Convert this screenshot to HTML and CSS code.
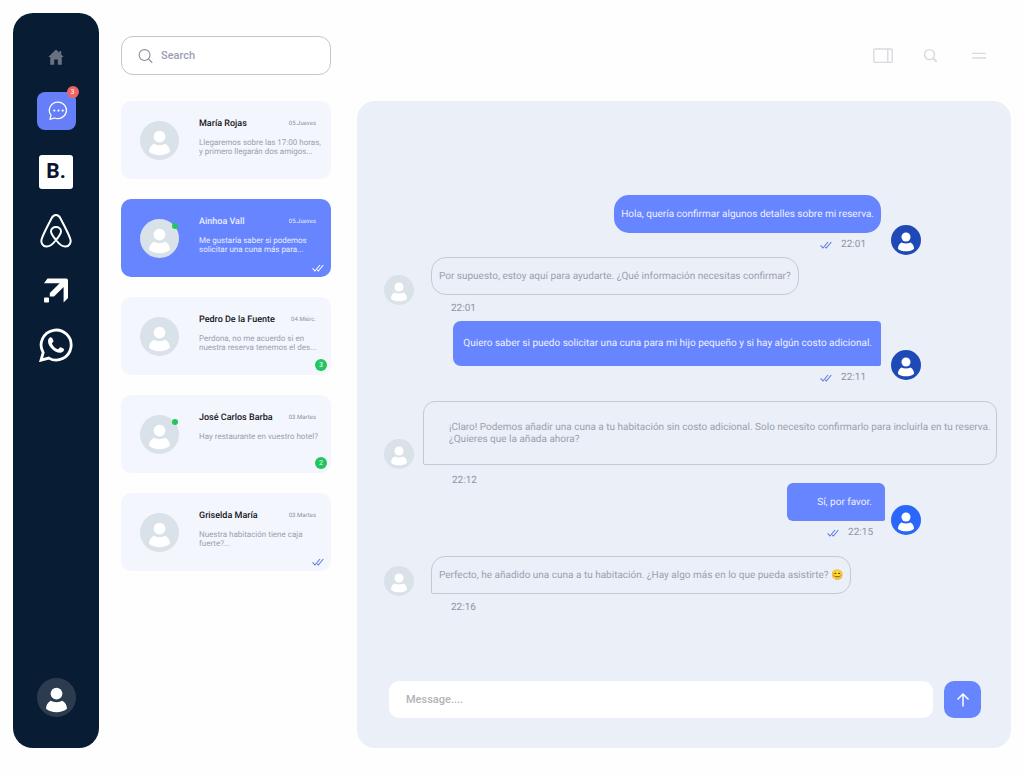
FILE: index.html
```html
<!DOCTYPE html>
<html lang="es">
<head>
    <meta charset="UTF-8">
    <meta name="viewport" content="width=device-width, initial-scale=1.0">
    <title>Mensajes</title>
    <link rel="stylesheet" href="styles.css">
</head>
<body>
    <!-- Iconos compartidos -->
    <svg class="sprite" aria-hidden="true">
        <symbol id="person" viewBox="0 0 39 39">
            <circle cx="19.5" cy="15.6" r="5.9"/>
            <path d="M13.6 22.7C17.2 24.6 21.8 24.6 25.4 22.7C28.2 24.2 29.9 27.2 30 30.8C25 35.3 14 35.3 9 30.8C9.1 27.2 10.8 24.2 13.6 22.7Z"/>
        </symbol>
        <symbol id="ticks" viewBox="0 0 12 8">
            <path d="M0.6 4.4L3 7L8 1M5.3 6L6.3 7L11.3 1"/>
        </symbol>
        <symbol id="lupa" viewBox="0 0 16 16">
            <circle cx="7" cy="7" r="5.8"/>
            <path d="M11.2 11.2L15.2 15.2"/>
        </symbol>
    </svg>

    <div class="app">
        <!-- Barra lateral -->
        <nav class="sidebar">
            <a href="#" class="nav-link" aria-label="Inicio">
                <svg class="icon-home" viewBox="0 0 16 20"><path d="M8 2.5L0.3 9.9H2.2V17.8H6.2V12.4H9.8V17.8H13.8V9.9H15.7L13.2 7.5V4H11.4V5.8Z"/></svg>
            </a>
            <a href="#" class="nav-link nav-chat" aria-label="Mensajes">
                <svg class="icon-chat" viewBox="0 0 20 20"><path d="M10.3 1.2A8.6 8.2 0 1 1 6.6 17L2 18.4L3 14.2A8.6 8.2 0 0 1 10.3 1.2Z"/><circle cx="6.3" cy="9.6" r="1.1"/><circle cx="10.5" cy="9.6" r="1.1"/><circle cx="14.7" cy="9.6" r="1.1"/></svg>
                <span class="nav-badge">3</span>
            </a>
            <a href="#" class="nav-link nav-booking">B.</a>
            <a href="#" class="nav-link" aria-label="Airbnb">
                <svg class="icon-airbnb" viewBox="0 0 32 34"><path d="M16 26C12.8 22.2 11 19.6 11 17.5C11 14.8 13.2 13 16 13C18.8 13 21 14.8 21 17.5C21 19.6 19.2 22.2 16 26ZM16 26C12.8 30.2 9.6 32.8 6.4 32.6C2.6 32.3 0.4 28.4 1.8 24.6C2.4 22.8 9.6 8 11.6 4.2C12.8 1.8 14 1 16 1C18 1 19.2 1.8 20.4 4.2C22.4 8 29.6 22.8 30.2 24.6C31.6 28.4 29.4 32.3 25.6 32.6C22.4 32.8 19.2 30.2 16 26Z"/></svg>
            </a>
            <a href="#" class="nav-link" aria-label="Expedia">
                <svg class="icon-arrow" viewBox="0 0 24 30"><path d="M3.5 5.5H22.2Q24 5.5 24 7.3V25L19.6 29.5V14L10 23.4H5.8V20L15.7 10.2H0Z"/><rect x="0" y="24.5" width="5" height="5" rx="0.8"/></svg>
            </a>
            <a href="#" class="nav-link" aria-label="WhatsApp">
                <svg class="icon-whatsapp" viewBox="0 0 34 34"><path class="ring" d="M2 32.2L4.2 24.6A15 15 0 1 1 9.8 30.1Z"/><path class="phone" d="M11.8 9.2C10.3 9.3 8.9 11 9 13.4C9.2 18.6 15.6 24.6 20.8 24.8C23.2 24.9 25 23.2 25.1 21.4C25.1 20.7 21.9 19.2 21.2 19.3C20.4 19.5 19.6 21.5 18.8 21.3C16.6 20.6 13.8 18 13 15.7C12.7 14.9 14.6 13.9 14.5 13C14.4 12.2 13.1 9.1 11.8 9.2Z"/></svg>
            </a>
            <a href="#" class="nav-link nav-profile" aria-label="Perfil">
                <svg class="avatar"><use href="#person"/></svg>
            </a>
        </nav>

        <!-- Lista de conversaciones -->
        <aside class="inbox">
            <label class="search">
                <svg class="icon-search"><use href="#lupa"/></svg>
                <input type="search" placeholder="Search" aria-label="Search">
            </label>

            <div class="cards">
                <a href="#" class="card">
                    <span class="card-avatar"><svg class="avatar"><use href="#person"/></svg></span>
                    <div class="card-body">
                        <div class="card-head"><h2>María Rojas</h2><time>05.Jueves</time></div>
                        <p>Llegaremos sobre las 17:00 horas,<br>y primero llegarán dos amigos...</p>
                    </div>
                </a>
                <a href="#" class="card active">
                    <span class="card-avatar online"><svg class="avatar"><use href="#person"/></svg></span>
                    <div class="card-body">
                        <div class="card-head"><h2>Ainhoa Vall</h2><time>05.Jueves</time></div>
                        <p>Me gustaría saber si podemos<br>solicitar una cuna más para...</p>
                    </div>
                    <svg class="ticks"><use href="#ticks"/></svg>
                </a>
                <a href="#" class="card">
                    <span class="card-avatar"><svg class="avatar"><use href="#person"/></svg></span>
                    <div class="card-body">
                        <div class="card-head"><h2>Pedro De la Fuente</h2><time>04.Miérc.</time></div>
                        <p>Perdona, no me acuerdo si en<br>nuestra reserva tenemos el des...</p>
                    </div>
                    <span class="count">3</span>
                </a>
                <a href="#" class="card">
                    <span class="card-avatar online"><svg class="avatar"><use href="#person"/></svg></span>
                    <div class="card-body">
                        <div class="card-head"><h2>José Carlos Barba</h2><time>03.Martes</time></div>
                        <p>Hay restaurante en vuestro hotel?</p>
                    </div>
                    <span class="count">2</span>
                </a>
                <a href="#" class="card">
                    <span class="card-avatar"><svg class="avatar"><use href="#person"/></svg></span>
                    <div class="card-body">
                        <div class="card-head"><h2>Griselda María</h2><time>03.Martes</time></div>
                        <p>Nuestra habitación tiene caja<br>fuerte?...</p>
                    </div>
                    <svg class="ticks"><use href="#ticks"/></svg>
                </a>
            </div>
        </aside>

        <!-- Conversación -->
        <main class="main">
            <header class="toolbar">
                <button type="button" aria-label="Panel"><svg class="icon-tool" viewBox="0 0 24 24"><rect x="2.8" y="5" width="18.4" height="13.4" rx="1.5"/><path d="M16.8 5V18.4"/></svg></button>
                <button type="button" aria-label="Buscar"><svg class="icon-tool" viewBox="0 0 24 24"><circle cx="10.5" cy="10.6" r="5"/><path class="thick" d="M14.3 14.4L17.8 17.9"/></svg></button>
                <button type="button" aria-label="Menú"><svg class="icon-tool" viewBox="0 0 24 24"><path d="M5 9.4H19M5 14H19"/></svg></button>
            </header>

            <section class="chat">
                <div class="messages">
                    <div class="message out low">
                        <div class="message-body">
                            <p class="bubble">Hola, quería confirmar algunos detalles sobre mi reserva.</p>
                            <div class="meta"><svg class="ticks"><use href="#ticks"/></svg><time>22:01</time></div>
                        </div>
                        <svg class="avatar"><use href="#person"/></svg>
                    </div>
                    <div class="message in low near">
                        <svg class="avatar"><use href="#person"/></svg>
                        <div class="message-body">
                            <p class="bubble">Por supuesto, estoy aquí para ayudarte. ¿Qué información necesitas confirmar?</p>
                            <div class="meta"><time>22:01</time></div>
                        </div>
                    </div>
                    <div class="message out near">
                        <div class="message-body">
                            <p class="bubble bubble-wide">Quiero saber si puedo solicitar una cuna para mi hijo pequeño y si hay algún costo adicional.</p>
                            <div class="meta"><svg class="ticks"><use href="#ticks"/></svg><time>22:11</time></div>
                        </div>
                        <svg class="avatar"><use href="#person"/></svg>
                    </div>
                    <div class="message in far long">
                        <svg class="avatar"><use href="#person"/></svg>
                        <div class="message-body">
                            <p class="bubble">¡Claro! Podemos añadir una cuna a tu habitación sin costo adicional. Solo necesito confirmarlo para incluirla en tu reserva.<br>¿Quieres que la añada ahora?</p>
                            <div class="meta"><time>22:12</time></div>
                        </div>
                    </div>
                    <div class="message out latest">
                        <div class="message-body">
                            <p class="bubble bubble-short">Sí, por favor.</p>
                            <div class="meta"><svg class="ticks"><use href="#ticks"/></svg><time>22:15</time></div>
                        </div>
                        <svg class="avatar"><use href="#person"/></svg>
                    </div>
                    <div class="message in far">
                        <svg class="avatar"><use href="#person"/></svg>
                        <div class="message-body">
                            <p class="bubble bubble-reply">Perfecto, he añadido una cuna a tu habitación. ¿Hay algo más en lo que pueda asistirte? 😊</p>
                            <div class="meta"><time>22:16</time></div>
                        </div>
                    </div>
                </div>

                <form class="composer">
                    <input type="text" placeholder="Message...." aria-label="Message">
                    <button type="button" aria-label="Enviar"><svg class="icon-send" viewBox="0 0 16 16"><path d="M8 14.5V2.5M2.5 7.5L8 2L13.5 7.5"/></svg></button>
                </form>
            </section>
        </main>
    </div>
</body>
</html>
```

FILE: styles.css
```css
* {
    box-sizing: border-box;
}

body {
    margin: 0;
    background-color: #fefefe;
    font-family: Roboto, "Liberation Sans", sans-serif;
    font-size: 10px;
    line-height: 12px;
    color: #9aa0ae;
    text-rendering: geometricPrecision;
}

a {
    color: inherit;
    text-decoration: none;
}

h2, p {
    margin: 0;
}

button {
    border: none;
    padding: 0;
    background: none;
    cursor: pointer;
}

.sprite {
    position: absolute;
    width: 0;
    height: 0;
}

.app {
    display: flex;
    min-height: 100vh;
    padding: 13px 13px 30px;
}

/* Barra lateral */
.sidebar {
    display: flex;
    flex-direction: column;
    align-items: center;
    gap: 25px;
    width: 86px;
    padding: 34px 0 31px;
    border-radius: 20px;
    background-color: #081c33;
}

.nav-link {
    display: flex;
    align-items: center;
    justify-content: center;
}

.icon-home {
    width: 16px;
    height: 20px;
    fill: #66727f;
}

.nav-chat {
    position: relative;
    width: 39px;
    height: 38px;
    border-radius: 8px;
    background-color: #667ff8;
}

.icon-chat {
    width: 20px;
    height: 20px;
    margin-left: 3px;
    fill: none;
    stroke: #fff;
    stroke-width: 1.3;
    stroke-linejoin: round;
}

.icon-chat circle {
    fill: #fff;
    stroke: none;
}

.nav-badge {
    position: absolute;
    top: -6px;
    right: -3px;
    width: 12px;
    height: 12px;
    border-radius: 50%;
    background-color: #ee6464;
    color: #fff;
    font-size: 7px;
    text-align: center;
}

.nav-booking {
    width: 34px;
    height: 34px;
    border-radius: 3px;
    background-color: #fff;
    color: #0b1330;
    font-size: 21px;
    font-weight: 700;
}

.icon-airbnb {
    width: 32px;
    height: 34px;
    fill: none;
    stroke: #fff;
    stroke-width: 2;
}

.icon-arrow {
    width: 24px;
    height: 30px;
    fill: #fff;
}

.icon-whatsapp {
    width: 34px;
    height: 34px;
}

.icon-whatsapp .ring {
    fill: none;
    stroke: #fff;
    stroke-width: 2.8;
}

.icon-whatsapp .phone {
    fill: #fff;
}

.nav-profile {
    margin-top: auto;
}

.avatar {
    display: block;
    flex-shrink: 0;
    width: 39px;
    height: 39px;
    border-radius: 50%;
    background-color: #d9e1e9;
    fill: #fff;
}

.nav-profile .avatar {
    background-color: #2c3b4e;
}

/* Lista de conversaciones */
.inbox {
    flex-shrink: 0;
    width: 210px;
    margin: 23px 26px 0 22px;
}

.search {
    display: flex;
    align-items: center;
    gap: 8px;
    height: 39px;
    padding: 0 16px;
    border: 1px solid #c3c6cf;
    border-radius: 12px;
    background-color: #fff;
}

.icon-search {
    flex-shrink: 0;
    width: 15px;
    height: 16px;
    fill: none;
    stroke: #8b8f99;
    stroke-width: 1.2;
}

.search input {
    width: 100%;
    padding: 0;
    border: none;
    outline: none;
    background: none;
    font: 500 11px/14px Roboto, "Liberation Sans", sans-serif;
}

.search input::placeholder {
    color: #9c9db5;
}

.cards {
    display: flex;
    flex-direction: column;
    gap: 20px;
    margin-top: 26px;
}

.card {
    position: relative;
    display: flex;
    gap: 20px;
    height: 78px;
    padding: 17px 15px 0 19px;
    border-radius: 10px;
    background-color: #f4f6fd;
}

.card-avatar {
    position: relative;
    margin-top: 3px;
}

.online::after {
    content: "";
    position: absolute;
    top: 4px;
    right: 1px;
    width: 6px;
    height: 6px;
    border-radius: 50%;
    background-color: #22c55e;
}

.card-body {
    flex: 1;
    min-width: 0;
}

.card-head {
    display: flex;
    align-items: center;
    justify-content: space-between;
}

.card h2 {
    color: #15171c;
    font-size: 9px;
    font-weight: 500;
    line-height: 12px;
}

.card time {
    font-size: 6px;
    color: #8b909c;
}

.card p {
    margin-top: 8px;
    font-size: 8px;
    line-height: 9px;
    white-space: nowrap;
}

.card.active {
    background-color: #6785ff;
}

.card.active h2,
.card.active p,
.card.active time {
    color: #e9edff;
}

.ticks {
    width: 12px;
    height: 8px;
    fill: none;
    stroke: #6078e6;
    stroke-width: 1.1;
}

.card .ticks {
    position: absolute;
    right: 7px;
    bottom: 5px;
}

.card.active .ticks {
    stroke: #fff;
}

.count {
    position: absolute;
    right: 4px;
    bottom: 4px;
    width: 12px;
    height: 12px;
    border-radius: 50%;
    background-color: #22c55e;
    color: #fff;
    font-size: 7px;
    text-align: center;
}

/* Cabecera */
.main {
    display: flex;
    flex: 1;
    flex-direction: column;
    min-width: 0;
}

.toolbar {
    display: flex;
    justify-content: flex-end;
    gap: 24px;
    padding: 31px 20px 33px;
}

.icon-tool {
    display: block;
    width: 24px;
    height: 24px;
    fill: none;
    stroke: #d8dade;
    stroke-width: 1.4;
}

.icon-tool .thick {
    stroke-width: 2;
}

/* Chat */
.chat {
    display: flex;
    flex: 1;
    flex-direction: column;
    padding: 94px 12px 30px 27px;
    border-radius: 18px;
    background-color: #ebeff8;
}

.messages {
    flex: 1;
}

.message {
    display: flex;
    align-items: flex-end;
    gap: 17px;
}

.message .avatar {
    width: 30px;
    height: 30px;
    margin-bottom: 18px;
}

.message.low .avatar {
    margin-bottom: 10px;
}

.message.near {
    margin-top: 6px;
}

.message.far {
    margin-top: 17px;
}

.message.latest {
    margin-top: -4px;
}

.message.long {
    gap: 9px;
}

.bubble {
    padding: 13px 7px 11px;
    border: 1px solid #c5c9d1;
    border-radius: 15px;
}

.long .bubble {
    padding: 20px 5px 18px 25px;
    border-radius: 12px 12px 12px 2px;
}

.bubble-reply {
    border-radius: 14px 14px 14px 2px;
}

.meta {
    display: flex;
    align-items: center;
    gap: 9px;
    margin-top: 8px;
    padding-left: 20px;
    color: #9095a2;
}

.long .meta {
    margin-top: 10px;
    padding-left: 29px;
}

.message.out {
    justify-content: flex-end;
    gap: 10px;
    padding-right: 78px;
}

.out .avatar {
    margin-bottom: 4px;
    background-color: #2049b8;
}

.out.low .avatar {
    margin-bottom: -4px;
}

.out.latest .avatar {
    background-color: #2b66fb;
}

.out .bubble {
    padding: 14px 7px 12px;
    border: none;
    background-color: #6785ff;
    color: #eef1ff;
}

.out .bubble-wide {
    padding: 17px 9px 16px 10px;
    border-radius: 8px 4px 2px 8px;
}

.out .bubble-short {
    margin-right: -4px;
    padding-right: 13px;
    padding-left: 30px;
    border-radius: 6px 6px 2px 6px;
}

.out .meta {
    justify-content: flex-end;
    margin-top: 6px;
    padding: 0 15px 0 0;
}

.out.latest .meta {
    padding-right: 8px;
}

.composer {
    display: flex;
    gap: 11px;
    padding: 0 18px 0 5px;
}

.composer input {
    flex: 1;
    min-width: 0;
    height: 37px;
    padding: 0 17px;
    border: none;
    border-radius: 10px;
    outline: none;
    background-color: #fff;
    font: 500 11px/14px Roboto, "Liberation Sans", sans-serif;
}

.composer input::placeholder {
    color: #b3b3b8;
}

.composer button {
    display: flex;
    align-items: center;
    justify-content: center;
    width: 37px;
    height: 37px;
    border-radius: 10px;
    background-color: #6785ff;
}

.icon-send {
    width: 16px;
    height: 16px;
    fill: none;
    stroke: #fff;
    stroke-width: 1.5;
}
```
